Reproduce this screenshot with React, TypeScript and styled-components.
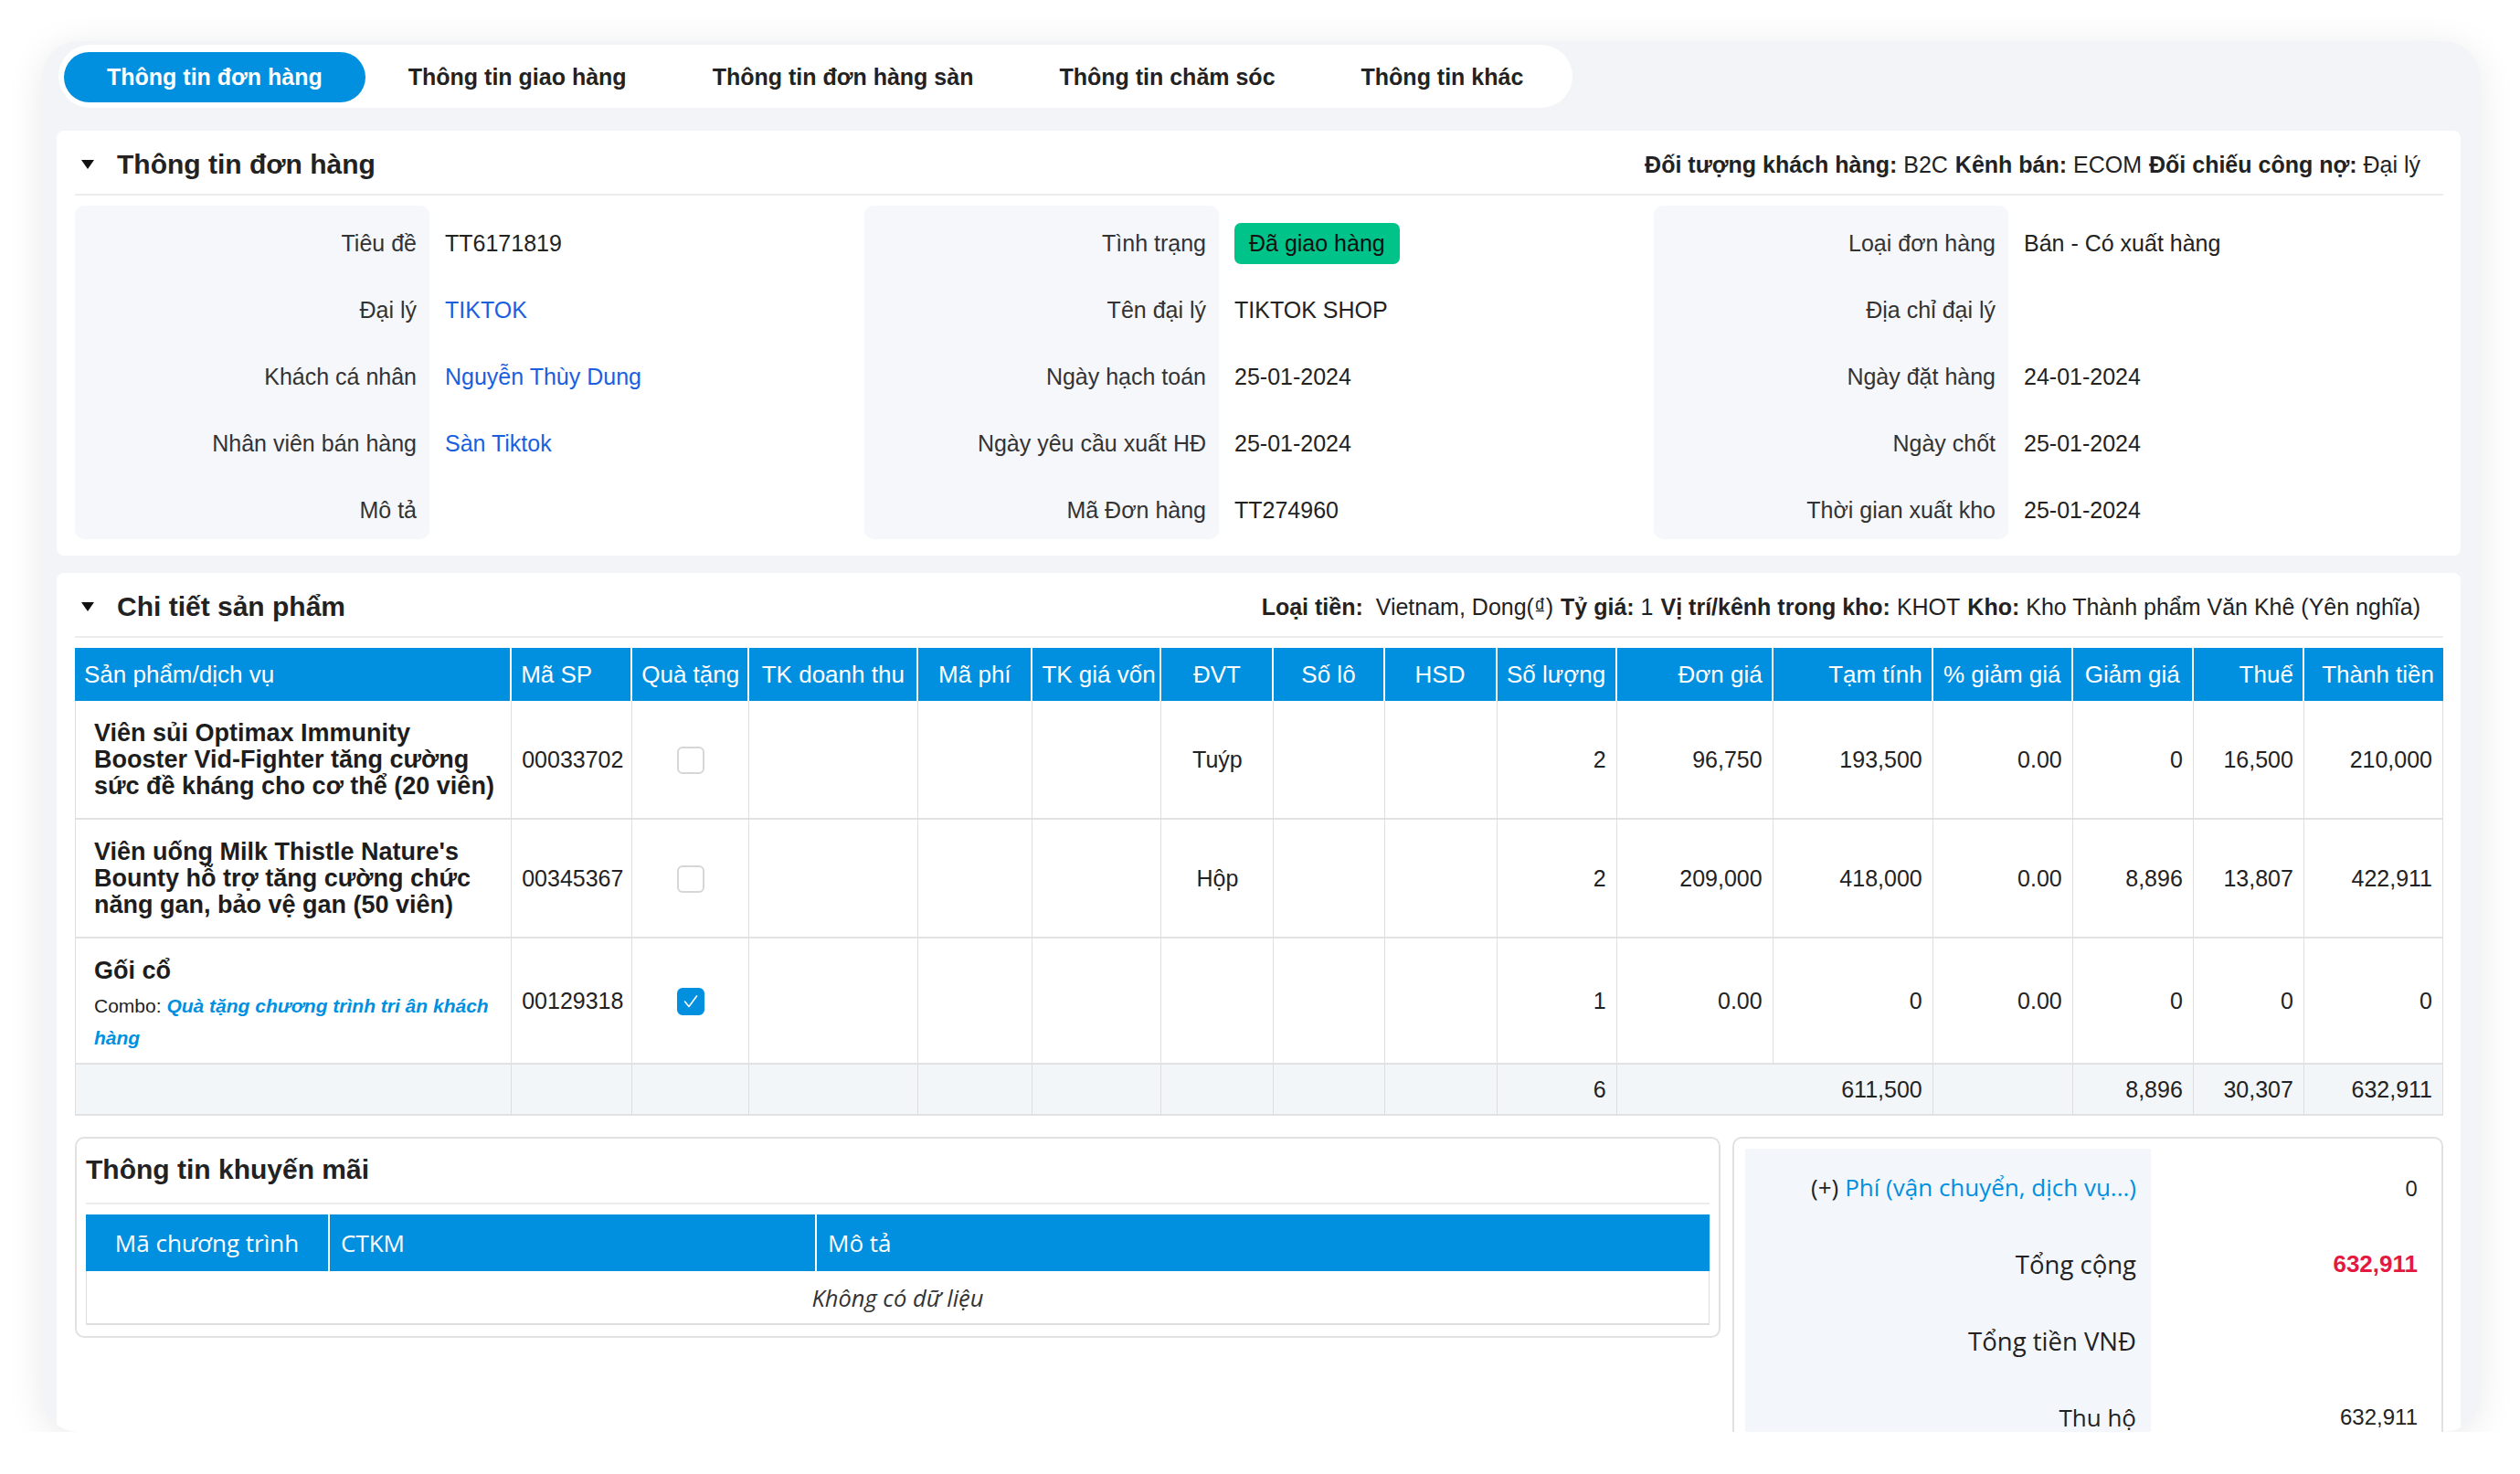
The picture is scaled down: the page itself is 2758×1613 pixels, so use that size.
import React from "react";
import styled, { createGlobalStyle } from "styled-components";

const BLUE = "#0090df";
const SANS = `"Liberation Sans", Arial, sans-serif`;
const OPEN = `"Open Sans", "Noto Sans", sans-serif`;

const GlobalStyle = createGlobalStyle`
  html, body { margin: 0; padding: 0; background: #ffffff; }
  body { font-family: ${SANS}; color: #222; }
  * { box-sizing: border-box; }
`;

const Page = styled.div`
  width: 2758px;
  padding: 45px 44px 0 46px;
`;

const Shell = styled.div`
  height: 1522px;
  border-radius: 40px;
  background: #f2f4f7;
  box-shadow: 0 6px 40px rgba(0, 0, 0, 0.09);
  overflow: hidden;
  padding: 4px 21px 0 16px;
`;

const TabBar = styled.nav`
  display: flex;
  width: fit-content;
  margin-left: 2px;
  padding: 8px 7px 6px 6px;
  background: #fff;
  border-radius: 35px;
`;

const Tab = styled.div<{ $active?: boolean }>`
  height: 55px;
  line-height: 55px;
  padding: 0 47px;
  border-radius: 28px;
  font-size: 25px;
  font-weight: 700;
  white-space: nowrap;
  color: ${(p) => (p.$active ? "#fff" : "#222")};
  background: ${(p) => (p.$active ? BLUE : "transparent")};
`;

const Card = styled.section<{ $gap: number }>`
  margin-top: ${(p) => p.$gap}px;
  background: #fff;
  border-radius: 8px;
  padding: 0 19px 18px 20px;
`;

const CardHeader = styled.header`
  display: flex;
  align-items: center;
  padding: 21px 25px 16px 7px;
  border-bottom: 2px solid #ececec;
`;

const Caret = styled.span`
  width: 0;
  height: 0;
  border-left: 7px solid transparent;
  border-right: 7px solid transparent;
  border-top: 10px solid #111;
  margin-right: 25px;
`;

const CardTitle = styled.h2`
  margin: 0;
  font-size: 30px;
  line-height: 32px;
  font-weight: 700;
  color: #222;
`;

const Meta = styled.div`
  margin-left: auto;
  font-size: 25px;
  color: #222;
  white-space: nowrap;
`;

const MetaKey = styled.b`
  font-weight: 700;
  margin-left: 8px;
  &:first-child {
    margin-left: 0;
  }
`;

/* ---------- info grid ---------- */

const InfoGrid = styled.div`
  display: grid;
  grid-template-columns: repeat(3, 1fr);
  margin-top: 11px;
`;

const InfoColumn = styled.div`
  display: grid;
  grid-template-columns: 388px 1fr;
`;

const LabelStack = styled.div`
  background: #f6f7fb;
  border-radius: 10px;
`;

const InfoLabel = styled.div`
  height: 73px;
  padding: 9px 14px 0 0;
  display: flex;
  align-items: center;
  justify-content: flex-end;
  font-size: 25px;
  color: #333;
  white-space: nowrap;
`;

const InfoValue = styled.div<{ $link?: boolean }>`
  height: 73px;
  padding: 9px 0 0 17px;
  display: flex;
  align-items: center;
  font-size: 25px;
  white-space: nowrap;
  color: ${(p) => (p.$link ? "#1a5fe0" : "#222")};
`;

const StatusBadge = styled.span`
  display: inline-block;
  height: 45px;
  line-height: 45px;
  padding: 0 16px;
  border-radius: 7px;
  background: #00c389;
  color: #111;
  font-size: 25px;
`;

/* ---------- product table ---------- */

const Table = styled.table`
  width: 100%;
  margin-top: 11px;
  border-collapse: separate;
  border-spacing: 0;
  table-layout: fixed;
  font-size: 25px;
`;

type Align = "left" | "center" | "right";

const Th = styled.th<{ $align: Align }>`
  height: 58px;
  padding: 0 10px;
  background: ${BLUE};
  color: #fff;
  font-weight: 400;
  font-size: 26px;
  text-align: ${(p) => p.$align};
  white-space: nowrap;
  border-right: 2px solid #ffffff;
  &:last-child {
    border-right: none;
  }
`;

const Td = styled.td<{ $align?: Align; $foot?: boolean }>`
  padding: 0 11px;
  vertical-align: middle;
  text-align: ${(p) => p.$align || "left"};
  color: #222;
  white-space: nowrap;
  background: ${(p) => (p.$foot ? "#f3f6f9" : "#fff")};
  border-right: 1px solid #dedede;
  border-bottom: 2px solid #e2e2e2;
  &:first-child {
    border-left: 1px solid #dedede;
  }
`;

const FootTd = styled(Td)`
  height: 56px;
`;

const ProductCell = styled(Td)<{ $pb: number }>`
  padding: 21px 12px ${(p) => p.$pb}px 20px;
  vertical-align: top;
  white-space: normal;
`;

const ProductName = styled.div`
  font-weight: 700;
  font-size: 27px;
  line-height: 29px;
  color: #1d1d1d;
`;

const NameLine = styled.span`
  display: block;
  white-space: nowrap;
`;

const Combo = styled.div`
  margin-top: 6px;
  font-size: 21px;
  line-height: 35px;
  color: #222;
  white-space: nowrap;
`;

const ComboLink = styled.a`
  color: ${BLUE};
  font-style: italic;
  font-weight: 700;
  text-decoration: none;
`;

const Check = styled.span<{ $on?: boolean }>`
  display: inline-flex;
  align-items: center;
  justify-content: center;
  width: 30px;
  height: 30px;
  border-radius: 6px;
  border: 2px solid ${(p) => (p.$on ? BLUE : "#d6d6d6")};
  background: ${(p) => (p.$on ? BLUE : "#fff")};
  vertical-align: middle;
`;

/* ---------- bottom ---------- */

const BottomGrid = styled.div`
  display: grid;
  grid-template-columns: 1801px 1fr;
  gap: 13px;
  margin-top: 23px;
  align-items: start;
`;

const Box = styled.div`
  border: 2px solid #e1e1e1;
  border-radius: 10px;
`;

const PromoBox = styled(Box)`
  padding: 0 10px 12px 10px;
`;

const PromoHeader = styled.div`
  padding: 18px 0 20px 0;
  border-bottom: 2px solid #ececec;
`;

const PromoTitle = styled.h3`
  margin: 0;
  font-size: 30px;
  line-height: 32px;
  font-weight: 700;
  color: #222;
`;

const PromoTable = styled.table`
  width: 100%;
  margin-top: 11px;
  border-collapse: separate;
  border-spacing: 0;
  table-layout: fixed;
  font-family: ${OPEN};
  font-size: 25.5px;
`;

const PromoTh = styled.th<{ $align: Align }>`
  height: 62px;
  padding: 0 12px;
  background: ${BLUE};
  color: #fff;
  font-weight: 400;
  font-size: 26px;
  text-align: ${(p) => p.$align};
  border-right: 2px solid #fff;
  &:last-child {
    border-right: none;
  }
`;

const EmptyCell = styled.td`
  height: 59px;
  text-align: center;
  font-style: italic;
  color: #333;
  border-left: 1px solid #dedede;
  border-right: 1px solid #dedede;
  border-bottom: 2px solid #dedede;
`;

const TotalsBox = styled(Box)`
  padding: 11px 12px;
  display: grid;
  grid-template-columns: 444px 1fr;
`;

const TotalsLabels = styled.div`
  background: #f3f6fa;
`;

const TotalLabel = styled.div<{ $size: number }>`
  height: 84px;
  display: flex;
  align-items: center;
  justify-content: flex-end;
  padding-right: 16px;
  font-family: ${OPEN};
  font-size: ${(p) => p.$size}px;
  color: #222;
  white-space: nowrap;
`;

const FeeLink = styled.span`
  color: ${BLUE};
  margin-left: 7px;
`;

const TotalValue = styled.div<{ $kind: "open" | "red" | "plain" }>`
  height: 84px;
  display: flex;
  align-items: center;
  justify-content: flex-end;
  padding-right: 14px;
  font-family: ${(p) => (p.$kind === "open" ? OPEN : SANS)};
  font-size: ${(p) => (p.$kind === "red" ? 26 : 24)}px;
  font-weight: ${(p) => (p.$kind === "red" ? 700 : 400)};
  color: ${(p) => (p.$kind === "red" ? "#e3193f" : "#222")};
`;

/* ---------- data ---------- */

const tabs = [
  "Thông tin đơn hàng",
  "Thông tin giao hàng",
  "Thông tin đơn hàng sàn",
  "Thông tin chăm sóc",
  "Thông tin khác",
];

type InfoItem = { label: string; value?: string; link?: boolean; badge?: boolean };

const infoColumns: InfoItem[][] = [
  [
    { label: "Tiêu đề", value: "TT6171819" },
    { label: "Đại lý", value: "TIKTOK", link: true },
    { label: "Khách cá nhân", value: "Nguyễn Thùy Dung", link: true },
    { label: "Nhân viên bán hàng", value: "Sàn Tiktok", link: true },
    { label: "Mô tả", value: "" },
  ],
  [
    { label: "Tình trạng", value: "Đã giao hàng", badge: true },
    { label: "Tên đại lý", value: "TIKTOK SHOP" },
    { label: "Ngày hạch toán", value: "25-01-2024" },
    { label: "Ngày yêu cầu xuất HĐ", value: "25-01-2024" },
    { label: "Mã Đơn hàng", value: "TT274960" },
  ],
  [
    { label: "Loại đơn hàng", value: "Bán - Có xuất hàng" },
    { label: "Địa chỉ đại lý", value: "" },
    { label: "Ngày đặt hàng", value: "24-01-2024" },
    { label: "Ngày chốt", value: "25-01-2024" },
    { label: "Thời gian xuất kho", value: "25-01-2024" },
  ],
];

const columns: { label: string; w: number; align: Align }[] = [
  { label: "Sản phẩm/dịch vụ", w: 478, align: "left" },
  { label: "Mã SP", w: 132, align: "left" },
  { label: "Quà tặng", w: 128, align: "center" },
  { label: "TK doanh thu", w: 185, align: "center" },
  { label: "Mã phí", w: 125, align: "center" },
  { label: "TK giá vốn", w: 141, align: "center" },
  { label: "ĐVT", w: 123, align: "center" },
  { label: "Số lô", w: 121, align: "center" },
  { label: "HSD", w: 123, align: "center" },
  { label: "Số lượng", w: 131, align: "center" },
  { label: "Đơn giá", w: 171, align: "right" },
  { label: "Tạm tính", w: 175, align: "right" },
  { label: "% giảm giá", w: 153, align: "center" },
  { label: "Giảm giá", w: 132, align: "center" },
  { label: "Thuế", w: 121, align: "right" },
  { label: "Thành tiền", w: 152, align: "right" },
];

type Product = {
  name: string[];
  combo?: { text: string[] };
  code: string;
  gift: boolean;
  unit: string;
  qty: string;
  price: string;
  subtotal: string;
  pct: string;
  discount: string;
  tax: string;
  total: string;
};

const products: Product[] = [
  {
    name: ["Viên sủi Optimax Immunity", "Booster Vid-Fighter tăng cường", "sức đề kháng cho cơ thể (20 viên)"],
    code: "00033702",
    gift: false,
    unit: "Tuýp",
    qty: "2",
    price: "96,750",
    subtotal: "193,500",
    pct: "0.00",
    discount: "0",
    tax: "16,500",
    total: "210,000",
  },
  {
    name: ["Viên uống Milk Thistle Nature's", "Bounty hỗ trợ tăng cường chức", "năng gan, bảo vệ gan (50 viên)"],
    code: "00345367",
    gift: false,
    unit: "Hộp",
    qty: "2",
    price: "209,000",
    subtotal: "418,000",
    pct: "0.00",
    discount: "8,896",
    tax: "13,807",
    total: "422,911",
  },
  {
    name: ["Gối cổ"],
    combo: { text: ["Quà tặng chương trình tri ân khách", "hàng"] },
    code: "00129318",
    gift: true,
    unit: "",
    qty: "1",
    price: "0.00",
    subtotal: "0",
    pct: "0.00",
    discount: "0",
    tax: "0",
    total: "0",
  },
];

const CheckMark = () => (
  <svg width="18" height="16" viewBox="0 0 18 16" fill="none">
    <polyline points="2.5,8 7,13.5 15.5,2" stroke="#fff" strokeWidth="1.6" strokeLinecap="round" strokeLinejoin="round" />
  </svg>
);

export default function App() {
  return (
    <>
      <GlobalStyle />
      <Page>
        <Shell>
          <TabBar>
            {tabs.map((t, i) => (
              <Tab key={t} $active={i === 0}>
                {t}
              </Tab>
            ))}
          </TabBar>

          <Card $gap={25}>
            <CardHeader>
              <Caret />
              <CardTitle>Thông tin đơn hàng</CardTitle>
              <Meta>
                <MetaKey>Đối tượng khách hàng:</MetaKey> <span>B2C</span>
                <MetaKey>Kênh bán:</MetaKey> <span>ECOM</span>
                <MetaKey>Đối chiếu công nợ:</MetaKey> <span>Đại lý</span>
              </Meta>
            </CardHeader>
            <InfoGrid>
              {infoColumns.map((col, ci) => (
                <InfoColumn key={ci}>
                  <LabelStack>
                    {col.map((it) => (
                      <InfoLabel key={it.label}>{it.label}</InfoLabel>
                    ))}
                  </LabelStack>
                  <div>
                    {col.map((it) => (
                      <InfoValue key={it.label} $link={it.link}>
                        {it.badge ? <StatusBadge>{it.value}</StatusBadge> : it.value}
                      </InfoValue>
                    ))}
                  </div>
                </InfoColumn>
              ))}
            </InfoGrid>
          </Card>

          <Card $gap={19}>
            <CardHeader>
              <Caret />
              <CardTitle>Chi tiết sản phẩm</CardTitle>
              <Meta>
                <MetaKey>Loại tiền:</MetaKey> <span>&nbsp;Vietnam, Dong(₫)</span>
                <MetaKey>Tỷ giá:</MetaKey> <span>1</span>
                <MetaKey>Vị trí/kênh trong kho:</MetaKey> <span>KHOT</span>
                <MetaKey>Kho:</MetaKey> <span>Kho Thành phẩm Văn Khê (Yên nghĩa)</span>
              </Meta>
            </CardHeader>

            <Table>
              <colgroup>
                {columns.map((c) => (
                  <col key={c.label} style={{ width: c.w }} />
                ))}
              </colgroup>
              <thead>
                <tr>
                  {columns.map((c) => (
                    <Th key={c.label} $align={c.align}>
                      {c.label}
                    </Th>
                  ))}
                </tr>
              </thead>
              <tbody>
                {products.map((p) => (
                  <tr key={p.code}>
                    <ProductCell $pb={p.combo ? 10 : 20}>
                      <ProductName>
                        {p.name.map((l) => (
                          <NameLine key={l}>{l}</NameLine>
                        ))}
                      </ProductName>
                      {p.combo && (
                        <Combo>
                          Combo: <ComboLink>{p.combo.text[0]}</ComboLink>
                          <br />
                          <ComboLink>{p.combo.text[1]}</ComboLink>
                        </Combo>
                      )}
                    </ProductCell>
                    <Td>{p.code}</Td>
                    <Td $align="center">
                      <Check $on={p.gift}>{p.gift && <CheckMark />}</Check>
                    </Td>
                    <Td />
                    <Td />
                    <Td />
                    <Td $align="center">{p.unit}</Td>
                    <Td />
                    <Td />
                    <Td $align="right">{p.qty}</Td>
                    <Td $align="right">{p.price}</Td>
                    <Td $align="right">{p.subtotal}</Td>
                    <Td $align="right">{p.pct}</Td>
                    <Td $align="right">{p.discount}</Td>
                    <Td $align="right">{p.tax}</Td>
                    <Td $align="right">{p.total}</Td>
                  </tr>
                ))}
                <tr>
                  <FootTd $foot />
                  <FootTd $foot />
                  <FootTd $foot />
                  <FootTd $foot />
                  <FootTd $foot />
                  <FootTd $foot />
                  <FootTd $foot />
                  <FootTd $foot />
                  <FootTd $foot />
                  <FootTd $foot $align="right">6</FootTd>
                  <FootTd $foot $align="right" colSpan={2}>
                    611,500
                  </FootTd>
                  <FootTd $foot />
                  <FootTd $foot $align="right">8,896</FootTd>
                  <FootTd $foot $align="right">30,307</FootTd>
                  <FootTd $foot $align="right">632,911</FootTd>
                </tr>
              </tbody>
            </Table>

            <BottomGrid>
              <PromoBox>
                <PromoHeader>
                  <PromoTitle>Thông tin khuyến mãi</PromoTitle>
                </PromoHeader>
                <PromoTable>
                  <colgroup>
                    <col style={{ width: 267 }} />
                    <col style={{ width: 533 }} />
                    <col />
                  </colgroup>
                  <thead>
                    <tr>
                      <PromoTh $align="center">Mã chương trình</PromoTh>
                      <PromoTh $align="left">CTKM</PromoTh>
                      <PromoTh $align="left">Mô tả</PromoTh>
                    </tr>
                  </thead>
                  <tbody>
                    <tr>
                      <EmptyCell colSpan={3}>Không có dữ liệu</EmptyCell>
                    </tr>
                  </tbody>
                </PromoTable>
              </PromoBox>

              <TotalsBox>
                <TotalsLabels>
                  <TotalLabel $size={26}>
                    (+)<FeeLink>Phí (vận chuyển, dịch vụ...)</FeeLink>
                  </TotalLabel>
                  <TotalLabel $size={27.5}>Tổng cộng</TotalLabel>
                  <TotalLabel $size={27.5}>Tổng tiền VNĐ</TotalLabel>
                  <TotalLabel $size={26}>Thu hộ</TotalLabel>
                </TotalsLabels>
                <div>
                  <TotalValue $kind="open">0</TotalValue>
                  <TotalValue $kind="red">632,911</TotalValue>
                  <TotalValue $kind="plain"></TotalValue>
                  <TotalValue $kind="plain">632,911</TotalValue>
                </div>
              </TotalsBox>
            </BottomGrid>
          </Card>
        </Shell>
      </Page>
    </>
  );
}
